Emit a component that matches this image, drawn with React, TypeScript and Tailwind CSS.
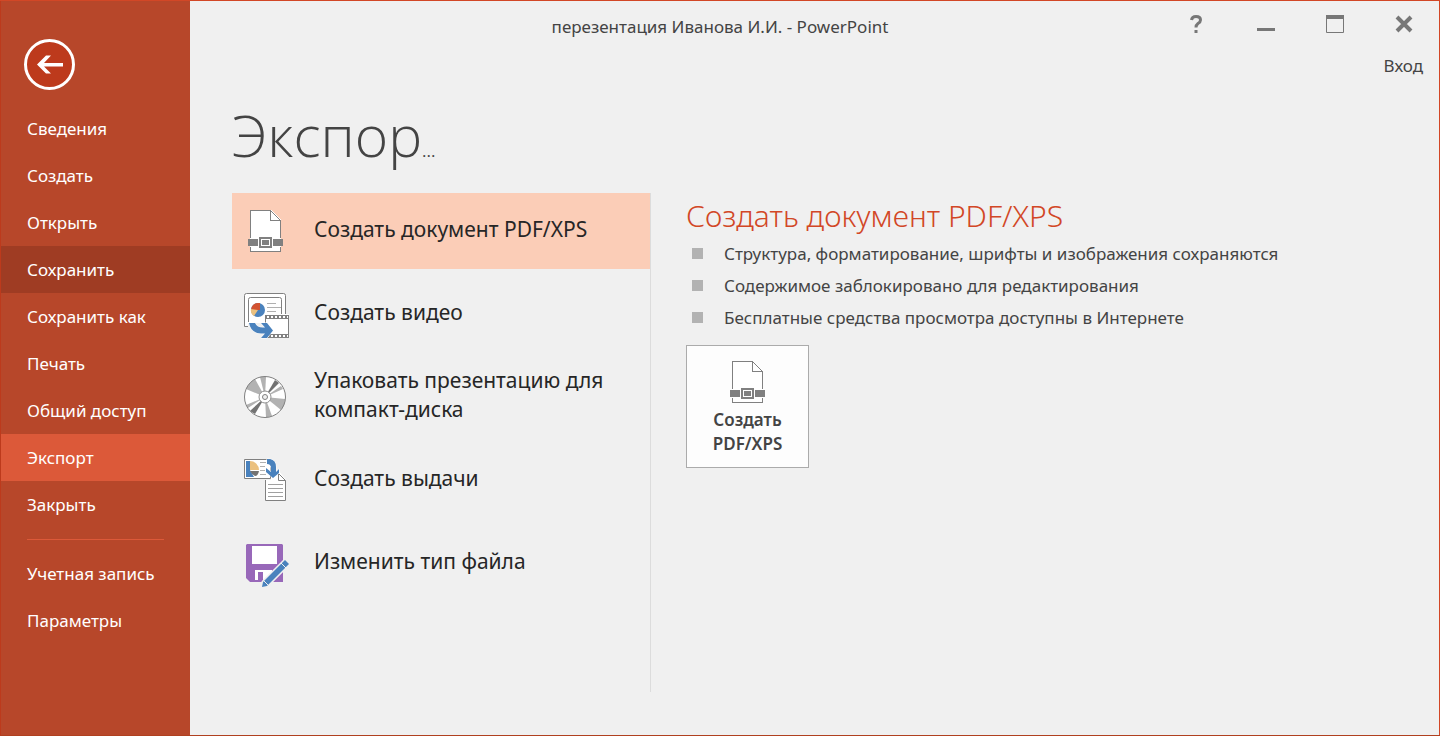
import type { ReactNode } from "react";

const navItems = ["Сведения", "Создать", "Открыть", "Сохранить", "Сохранить как", "Печать", "Общий доступ", "Экспорт", "Закрыть"];
const accountItems = ["Учетная запись", "Параметры"];
const features = [
  "Структура, форматирование, шрифты и изображения сохраняются",
  "Содержимое заблокировано для редактирования",
  "Бесплатные средства просмотра доступны в Интернете",
];

function PdfIcon() {
  return (
    <svg width="60" height="52" viewBox="0 5 60 52" aria-hidden="true" shapeRendering="crispEdges">
      <path d="M14 10H35L45 20V52H14Z" fill="#fff" />
      <path d="M14.500 38V10.500H34.500V20.500H44.500V38M14.500 47V51.500H44.500V47" fill="none" stroke="#808080" />
      <path d="M34.500 10.500L44.500 20.500" stroke="#808080" shapeRendering="auto" />
      <path d="M12 39H22V46H12ZM37 39H47V46H37Z" fill="#808080" />
      <path d="M23 37H36V48H23Z" fill="#808080" />
      <path d="M25 39H34V46H25Z" fill="#fff" />
      <path d="M26 40H33V45H26Z" fill="#808080" />
    </svg>
  );
}

function VideoIcon() {
  return (
    <svg width="60" height="60" viewBox="0 0 60 60" aria-hidden="true">
      <path d="M10.500 9.500H47.500Q49.500 9.500 49.500 11.500V42.500H8.500V11.500Q8.500 9.500 10.500 9.500Z" fill="#fff" stroke="#808080" />
      <path d="M12.500 38V15.500Q12.500 13.500 14.500 13.500H43.500Q45.500 13.500 45.500 15.500V31" fill="none" stroke="#808080" />
      <circle cx="22" cy="26" r="7" fill="#4a82bd" />
      <path d="M22 26H15A7 7 0 0 1 22 19H24V26Z" fill="#d35230" />
      <path d="M22 26L18 32A7 7 0 0 1 15 25Z" fill="#ebc17f" />
      <path d="M31 19.500H40M31 23.500H45M31 27.500H40" stroke="#b0b0b0" />
      <path d="M12 39H36V55H12Z" fill="#f0f0f0" />
      <path d="M28 30H53V54H28Z" fill="#fff" />
      <path d="M29 33H53M29 52H53" stroke="#808080" strokeWidth="4" />
      <path d="M29.500 31V54M52.500 31V54" stroke="#808080" />
      <path d="M31 33H52M31 52H52" stroke="#fff" strokeWidth="2" strokeDasharray="2 2" />
      <path d="M13 39H19Q21 43.500 27 43.500H29L25 39H31L37 46.500L31 54H25L29 49.500H25Q15 49 13 39Z" fill="#4a82bd" stroke="#fff" paintOrder="stroke" />
    </svg>
  );
}

function DiscIcon() {
  return (
    <svg width="60" height="60" viewBox="0 -1 60 60" aria-hidden="true">
      <circle cx="29" cy="29" r="20.500" fill="#fff" />
      <path d="M29 29L10 21Q13 14 19 11Z" fill="#b2b2b2" />
      <path d="M29 29L24 9L30 8.500Z" fill="#b2b2b2" />
      <path d="M29 29L39 12L43 15Z" fill="#737373" />
      <path d="M29 29L45 18L47 21Z" fill="#b2b2b2" />
      <path d="M29 29L49 31Q49 38 45 42Z" fill="#b2b2b2" />
      <path d="M29 29L36 48L30 49.500Z" fill="#b2b2b2" />
      <path d="M29 29L19 46L14 43Z" fill="#737373" />
      <path d="M29 29L12 40L10 37Z" fill="#b2b2b2" />
      <circle cx="29" cy="29" r="6" fill="#fff" stroke="#909090" />
      <circle cx="29" cy="29" r="2.500" fill="#f0f0f0" stroke="#808080" />
      <circle cx="29" cy="29" r="20.500" fill="none" stroke="#808080" />
    </svg>
  );
}

function HandoutIcon() {
  return (
    <svg width="60" height="60" viewBox="0 0 60 60" aria-hidden="true">
      <path d="M8.500 9.500H34.500V28.500H8.500Z" fill="#fff" stroke="#808080" />
      <path d="M10 11H14V20L18 27H10Z" fill="#4a82bd" />
      <path d="M14 20V11A9 9 0 0 1 23 20Z" fill="#ebc17f" />
      <path d="M14 21H23Q22 26 19 26Q16 25 14 21Z" fill="#737373" />
      <path d="M24 12.500H30M24 16.500H29M24 20.500H29M24 24.500H30" stroke="#b0b0b0" />
      <path d="M29 30H35V21H43L50 30V51H29Z" fill="#fff" />
      <path d="M29.500 30V50.500H49.500V30.500H42.500V23.500M42.500 23.500L49.500 30.500" fill="none" stroke="#808080" />
      <path d="M32 34.500H47M32 38.500H47M32 42.500H47M32 46.500H47" stroke="#a0a0a0" />
      <path d="M31 9H34Q40 10 40 17V22L43 19V23L37 28L30 22V18L35 22V18Q35 14 31 14Z" fill="#4a82bd" stroke="#fff" paintOrder="stroke" />
    </svg>
  );
}

function FileTypeIcon() {
  return (
    <svg width="60" height="60" viewBox="0 -2 60 60" aria-hidden="true">
      <path d="M11 9H46L47 10V47H14L10 43V10Z" fill="#9868b9" />
      <path d="M16 11H41V29H16Z" fill="#fff" />
      <path d="M19 35H36V45H27V37H22V45H19Z" fill="#fff" />
      <path d="M26 52L27 47L49 25L53 29L31 51Z" fill="#4a82bd" stroke="#f0f0f0" strokeWidth="3" paintOrder="stroke" />
      <path d="M45 28L50 33M28 46L32 50" stroke="#f0f0f0" />
    </svg>
  );
}

const exportOptions: { label: string; icon: ReactNode }[] = [
  { label: "Создать документ PDF/XPS", icon: <PdfIcon /> },
  { label: "Создать видео", icon: <VideoIcon /> },
  { label: "Упаковать презентацию для компакт-диска", icon: <DiscIcon /> },
  { label: "Создать выдачи", icon: <HandoutIcon /> },
  { label: "Изменить тип файла", icon: <FileTypeIcon /> },
];

function NavItem({ label }: { label: string }) {
  const tone = label === "Экспорт" ? "bg-[#dc5939]" : label === "Сохранить" ? "bg-[#9f3c23]" : "";
  return (
    <li>
      <button type="button" className={`block h-[47px] w-full pl-[26px] text-left ${tone}`}>
        {label}
      </button>
    </li>
  );
}

function Sidebar() {
  return (
    <nav className="w-[190px] shrink-0 border-l border-[#bd3a1c] bg-[#b7472a] pt-[38px] text-[17px] text-white">
      <button type="button" aria-label="Назад" className="ml-[23px] block">
        <svg width="51" height="51" viewBox="0 0 51 51" aria-hidden="true">
          <circle cx="25.500" cy="25.500" r="24" fill="#bd3a1c" stroke="#fff" strokeWidth="3" />
          <path d="M13 25.500L22 16.500H27L20 24H39V27.500H20L27 34.500H22Z" fill="#fff" />
        </svg>
      </button>
      <ul className="pt-[15px]">
        {navItems.map((label) => (
          <NavItem key={label} label={label} />
        ))}
      </ul>
      <hr className="mx-[26px] mt-[11px] mb-[10px] border-[#dc5939]" />
      <ul>
        {accountItems.map((label) => (
          <NavItem key={label} label={label} />
        ))}
      </ul>
    </nav>
  );
}

function TitleBar() {
  return (
    <header className="text-[17px]">
      <div className="flex h-[52px] items-center">
        <span className="flex-1 pl-[68px] text-center">перезентация Иванова И.И. - PowerPoint</span>
        <div className="flex gap-[39px] pr-[20px] pb-[6px]">
          <button type="button" aria-label="Справка">
            <svg width="30" height="30" viewBox="0 0 30 30" fill="none" stroke="#777" strokeWidth="3" aria-hidden="true">
              <path d="M9.500 11Q10 7.500 14 7.500Q18.500 7.500 18.500 11Q18.500 13 16 14.500Q14 16 14 18.500M14 21V24" />
            </svg>
          </button>
          <button type="button" aria-label="Свернуть">
            <svg width="30" height="30" viewBox="0 0 30 30" aria-hidden="true">
              <path d="M6 19H24V22H6Z" fill="#777" />
            </svg>
          </button>
          <button type="button" aria-label="Развернуть">
            <svg width="30" height="30" viewBox="0 0 30 30" fill="none" stroke="#777" aria-hidden="true">
              <path d="M6.500 6.500H23.500V23.500H6.500Z" />
              <path d="M6 8H24" strokeWidth="4" />
            </svg>
          </button>
          <button type="button" aria-label="Закрыть окно">
            <svg width="30" height="30" viewBox="0 0 30 30" fill="none" stroke="#777" strokeWidth="4" aria-hidden="true">
              <path d="M8 8L22 22M22 8L8 22" />
            </svg>
          </button>
        </div>
      </div>
      <div className="flex justify-end pr-4">
        <a href="#signin" className="leading-[26px]">Вход</a>
      </div>
    </header>
  );
}

export default function App() {
  return (
    <div className="flex min-h-screen border-b border-[#b0401f] bg-[#f0f0f0] font-['Noto_Sans','Liberation_Sans',sans-serif] text-[#444]">
      <div className="flex flex-1 border-t border-r border-[#d24726]">
        <Sidebar />
        <div className="flex-1">
          <TitleBar />
          <main className="px-[42px]">
            <h1 className="flex h-[114px] items-center font-['Open_Sans','Noto_Sans',sans-serif] text-[57px] font-light">
              <span className="flex items-baseline">
                Экспор<span className="text-[17px] font-normal">...</span>
              </span>
            </h1>
            <div className="flex">
              <ul className="flex h-[499px] w-[419px] shrink-0 flex-col gap-[7px] border-r border-[#dcdcdc]">
                {exportOptions.map(({ label, icon }, i) => (
                  <li key={label}>
                    <button type="button" className={`flex h-[76px] w-full items-center pr-6 pl-1 text-left text-[21px] leading-[29px] text-[#262626] ${i === 0 ? "bg-[#fbcdb7]" : ""}`}>
                      <span className="mr-[18px] shrink-0">{icon}</span>
                      <span className="pb-1">{label}</span>
                    </button>
                  </li>
                ))}
              </ul>
              <section className="pl-[35px]">
                <h2 className="text-[30px] leading-[45px] font-light text-[#d24726]">Создать документ PDF/XPS</h2>
                <ul className="text-[17px] leading-[32px]">
                  {features.map((text) => (
                    <li key={text} className="flex items-center gap-[21px] pl-[6px]">
                      <span className="mb-[2px] size-[11px] shrink-0 bg-[#b2b2b2]" />
                      {text}
                    </li>
                  ))}
                </ul>
                <button type="button" className="mt-[11px] flex size-[123px] flex-col items-center border border-[#ababab] bg-[#fdfdfd] pt-[10px] text-[17px] leading-[24px] font-semibold">
                  <PdfIcon />
                  <span>Создать<br />PDF/XPS</span>
                </button>
              </section>
            </div>
          </main>
        </div>
      </div>
    </div>
  );
}
